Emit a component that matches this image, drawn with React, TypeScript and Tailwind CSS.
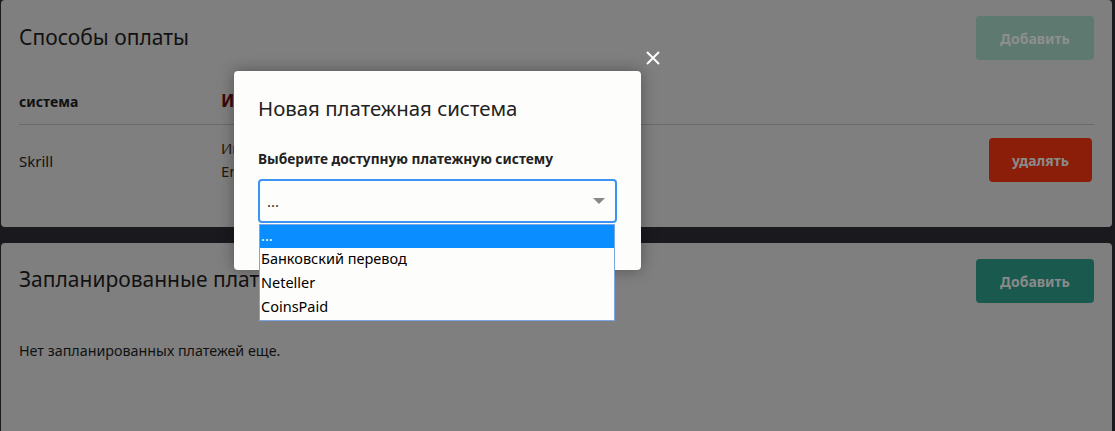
const font = { fontFamily: '"Noto Sans", "Open Sans", sans-serif' };

function Card({ children }: { children: React.ReactNode }) {
  return <div className="rounded-[4px] bg-[#7f7f7f] px-[18px]">{children}</div>;
}

function AddButton({ disabled }: { disabled?: boolean }) {
  return (
    <button
      className={
        disabled
          ? "h-[44px] w-[118px] rounded-[4px] bg-[#5e7a70] text-[14px] font-bold text-[#8e8e8e]"
          : "h-[44px] w-[118px] rounded-[4px] bg-[#1a5a4e] text-[14px] font-bold text-[#8a8a8a]"
      }
    >
      Добавить
    </button>
  );
}

const options = ["...", "Банковский перевод", "Neteller", "CoinsPaid"];

export default function App() {
  return (
    <div className="relative h-[431px] w-[1115px] overflow-hidden bg-[#1a191e] text-[#111]" style={font}>
      <div className="flex flex-col gap-[16px] pl-px pr-[3px]">
        <Card>
          <div className="flex h-[227px] flex-col">
            <div className="flex items-start justify-between pt-[16px]">
              <h2 className="pt-[5px] text-[21px] leading-[32px]">Способы оплаты</h2>
              <AddButton disabled />
            </div>
            <div className="mt-[28px] flex h-[37px] items-center border-b border-[#6a6a6a] pb-[12px] pt-[2px]">
              <div className="w-[202px] text-[14px] font-bold">система</div>
              <div className="text-[17px] font-bold text-[#3d0808]">Имя</div>
            </div>
            <div className="flex items-center pt-[12px]">
              <div className="w-[202px] pt-[2px] text-[15px]">Skrill</div>
              <div className="flex-1 text-[15px] leading-[23px] text-[#2b1608]">
                <div>Имя владельца</div>
                <div>Email</div>
              </div>
              <button className="mr-[2px] h-[44px] w-[103px] rounded-[4px] bg-[#8b1e08] text-[14px] font-bold text-[#8a8a8a]">
                удалять
              </button>
            </div>
          </div>
        </Card>
        <Card>
          <div className="flex h-[200px] flex-col">
            <div className="flex items-start justify-between pt-[16px]">
              <h2 className="pt-[4px] text-[21px] leading-[32px]">Запланированные платежи</h2>
              <AddButton />
            </div>
            <p className="mt-[37px] text-[14.3px]">Нет запланированных платежей еще.</p>
          </div>
        </Card>
      </div>

      <button className="absolute left-[645px] top-[50px] text-white">
        <svg width="16" height="16" viewBox="0 0 16 16" fill="none" stroke="currentColor" strokeWidth="2">
          <path d="M2 2l12 12M14 2L2 14" />
        </svg>
      </button>

      <div className="absolute left-[234px] top-[71px] h-[199px] w-[407px] rounded-[4px] bg-[#fdfdfb] px-[24px] shadow-[0_0_16px_rgba(0,0,0,0.35)]">
        <h3 className="pt-[22px] text-[20.4px] leading-[30px] text-[#222]">Новая платежная система</h3>
        <label className="mt-[27px] block text-[13.7px] font-bold leading-[18px] text-[#222]">
          Выберите доступную платежную систему
        </label>
        <div className="mt-[11px] box-border flex h-[44px] w-[359px] items-center justify-between rounded-[4px] border-2 border-[#3b93f2] pl-[7px] pr-[10px]">
          <span className="text-[15px] text-[#333]">...</span>
          <svg width="12" height="6" viewBox="0 0 12 6">
            <path d="M0 0h12L6 6z" fill="#888" />
          </svg>
        </div>
      </div>

      <ul className="absolute left-[259px] top-[224px] w-[356px] border border-[#7aa6e6] bg-[#fdfdfb] text-[14.5px] text-black">
        {options.map((o, i) => (
          <li
            key={o}
            className={
              i === 0
                ? "h-[23px] bg-[#0a8dff] pl-[1px] leading-[20px] text-white"
                : "h-[24px] pl-[1px] leading-[21px]"
            }
          >
            {o}
          </li>
        ))}
      </ul>
    </div>
  );
}
